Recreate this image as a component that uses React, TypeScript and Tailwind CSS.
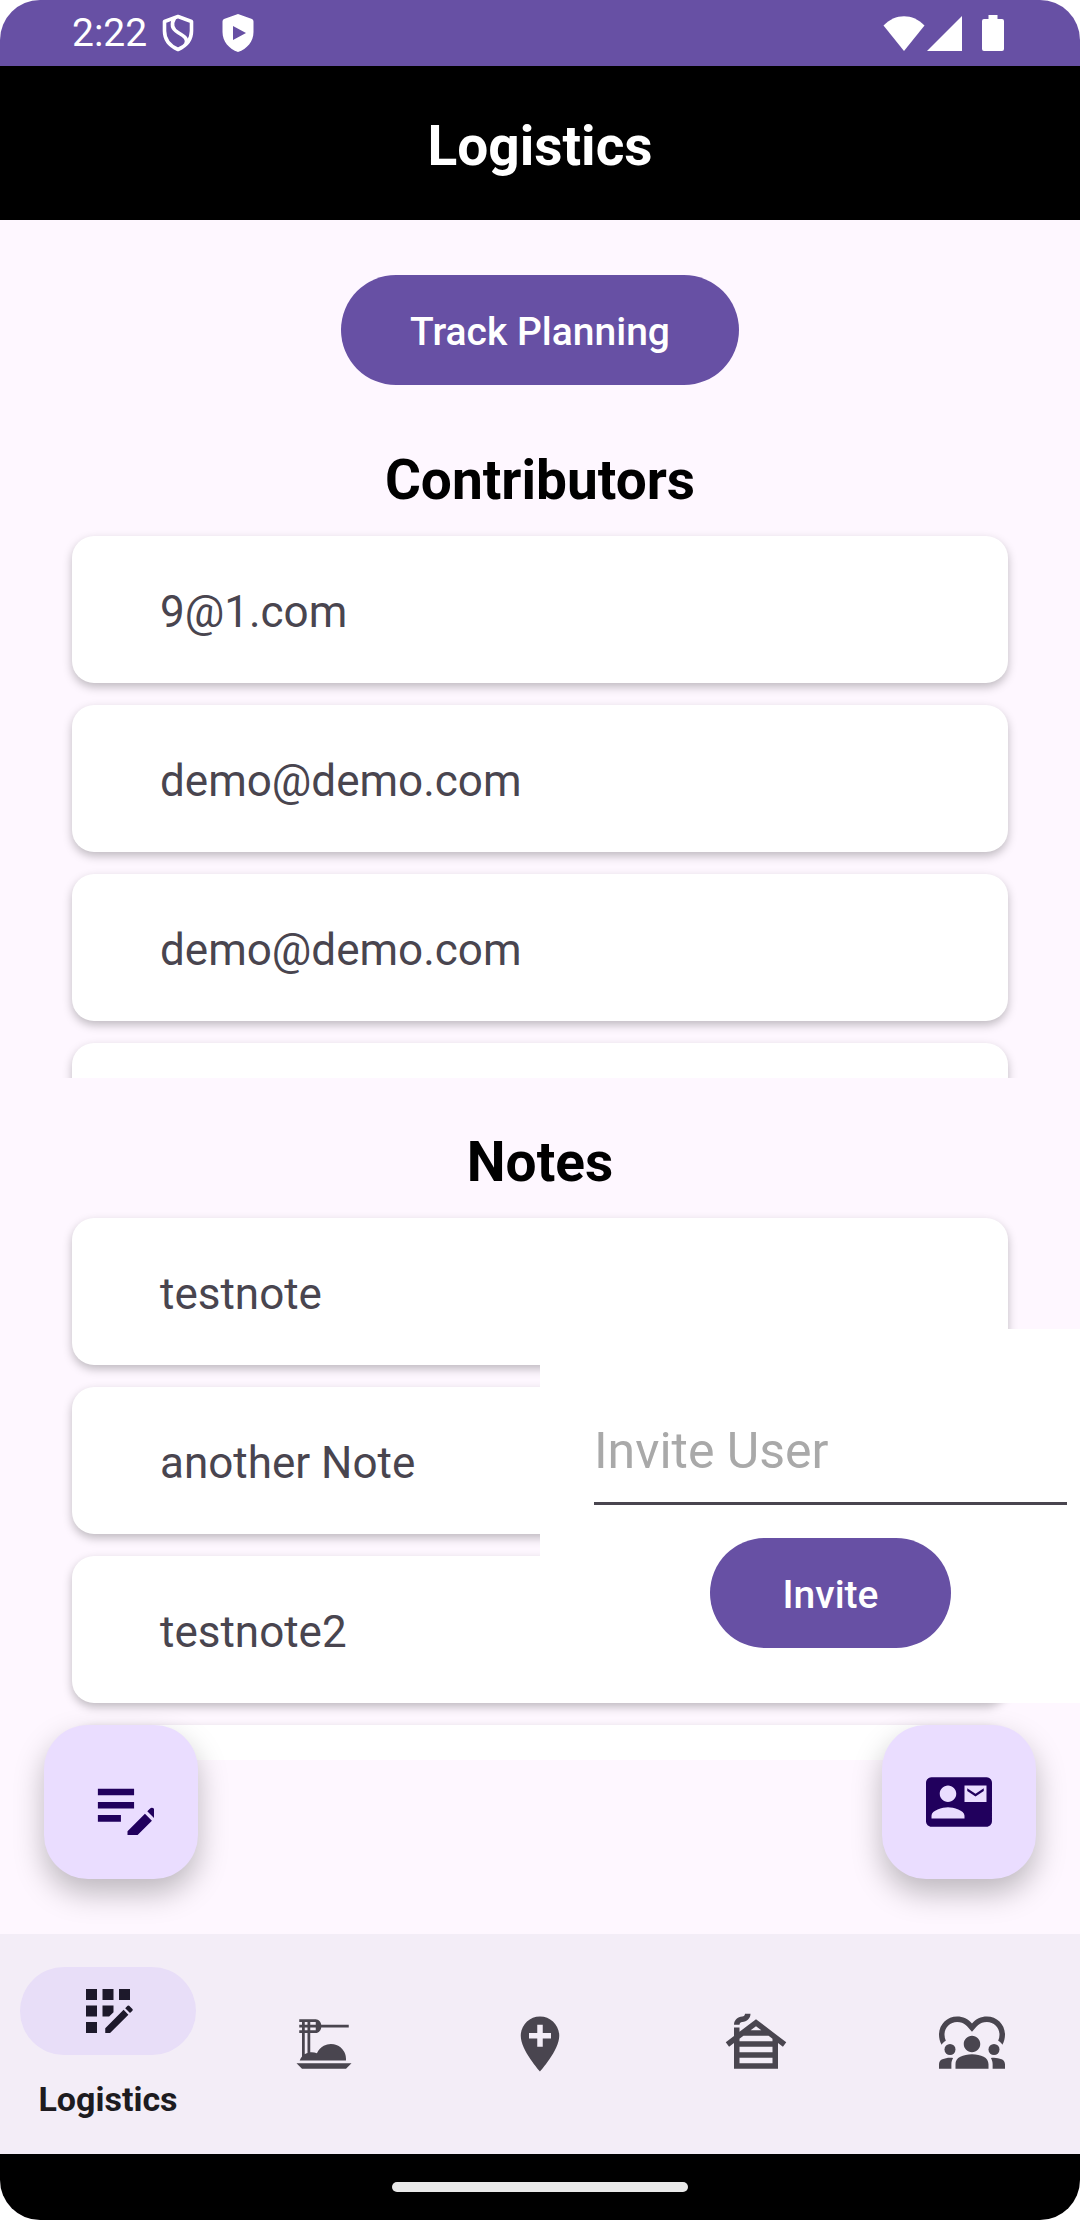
import type { ReactNode } from "react";
import {
  MdAddLocation,
  MdAppRegistration,
  MdCabin,
  MdContactMail,
  MdDinnerDining,
  MdDiversity1,
  MdEditNote,
} from "react-icons/md";

const contributors = ["9@1.com", "demo@demo.com", "demo@demo.com", ""];
const notes = ["testnote", "another Note", "testnote2", ""];

function StatusBar() {
  return (
    <div className="flex h-[66px] items-center justify-between bg-[#6750a4] pr-[76px] pl-[72px] text-white">
      <div className="flex items-center">
        <span className="text-[39px] leading-[46px]">2:22</span>
        <svg className="ml-[15px] h-[38px] w-8" viewBox="0 0 32 38" fill="none" stroke="currentColor" strokeWidth="3.6" strokeLinejoin="round">
          <path d="M16 2.500 29.500 7.500V17C29.500 25.500 24 32 16 35.500 8 32 2.500 25.500 2.500 17V7.500Z" />
          <path d="M12.500 4C9 10 10 15 16 18.500 23 22.500 26 25 24 30" />
        </svg>
        <svg className="ml-[28px] h-[38px] w-8" viewBox="0 0 32 38" fill="currentColor">
          <path
            fillRule="evenodd"
            d="M16 0 30 5Q31.500 5.600 31.500 7.500V18C31.500 27.500 25 35 16 38 7 35 .5 27.500 .5 18V7.500Q.5 5.600 2 5ZM11 12V26L24 19Z"
          />
        </svg>
      </div>
      <div className="flex items-center">
        <svg className="h-9 w-[42px]" viewBox="0 0 42 36" fill="currentColor">
          <path d="M.5 10.500C12-2 30-2 41.500 10.500L21 36Z" />
        </svg>
        <svg className="ml-[2px] h-9 w-[35px]" viewBox="0 0 35 36" fill="currentColor">
          <path d="M35 1V36H0Z" />
        </svg>
        <svg className="ml-5 h-9 w-[22px]" viewBox="0 0 22 36" fill="currentColor">
          <path d="M6.500 0H15.500V4H20Q22 4 22 6V34Q22 36 20 36H2Q0 36 0 34V6Q0 4 2 4H6.500Z" />
        </svg>
      </div>
    </div>
  );
}

function Card({ text }: { text: string }) {
  return (
    <li className="h-[147px] shrink-0 rounded-[22px] bg-white pt-[50px] pl-[88px] text-[44px] leading-[52px] text-[#49454f] shadow-[0_4px_10px_rgba(0,0,0,0.25)]">
      {text}
    </li>
  );
}

function CardList({ title, items }: { title: string; items: string[] }) {
  return (
    <>
      <h2 className="text-center text-[55px] leading-[64px] font-bold text-black">{title}</h2>
      <ul className="flex h-[566px] flex-col gap-[22px] overflow-hidden px-[72px] pt-6">
        {items.map((text, i) => (
          <Card key={i} text={text} />
        ))}
      </ul>
    </>
  );
}

function PillButton({ children, className }: { children: ReactNode; className: string }) {
  return (
    <button
      type="button"
      className={`h-[110px] rounded-full bg-[#6750a4] pt-1 text-[39px] leading-[46px] font-medium text-white ${className}`}
    >
      {children}
    </button>
  );
}

function InvitePanel() {
  return (
    <form className="absolute right-0 bottom-[57px] flex w-1/2 flex-col items-center bg-white pt-[93px] pr-[13px] pb-[55px] pl-[54px]">
      <input
        type="text"
        aria-label="Invite User"
        placeholder="Invite User"
        className="h-[83px] w-full border-b-[3px] border-[#49454f] pb-[22px] text-[50px] leading-[58px] outline-none placeholder:text-[#a9a9a9]"
      />
      <PillButton className="mt-[33px] px-[73px]">Invite</PillButton>
    </form>
  );
}

const fabClass =
  "absolute bottom-[55px] flex size-[154px] items-center justify-center rounded-[44px] bg-[#eaddff] text-[#21005d] shadow-[0_14px_30px_rgba(0,0,0,0.26)]";

const tabs = [
  { label: "Food", icon: <MdDinnerDining className="size-[66px]" /> },
  { label: "Places", icon: <MdAddLocation className="size-[66px]" /> },
  { label: "Lodging", icon: <MdCabin className="size-[66px]" /> },
  { label: "Community", icon: <MdDiversity1 className="size-[66px]" /> },
];

export default function App() {
  return (
    <div className="min-h-screen bg-white font-['Roboto',sans-serif]">
      <div className="flex min-h-screen flex-col overflow-hidden rounded-[40px] bg-[#fef7ff]">
        <StatusBar />
        <header className="flex h-[154px] items-center justify-center bg-black pt-1.5">
          <h1 className="text-[55px] leading-[64px] font-bold text-white">Logistics</h1>
        </header>

        <main className="relative flex-1 pt-[55px] pb-[174px]">
          <div className="flex justify-center">
            <PillButton className="px-[69px]">Track Planning</PillButton>
          </div>
          <section className="mt-[63px]">
            <CardList title="Contributors" items={contributors} />
          </section>
          <section className="relative mt-[52px]">
            <CardList title="Notes" items={notes} />
            <InvitePanel />
          </section>
          <button type="button" aria-label="Add note" className={`${fabClass} left-11`}>
            <span className="block size-[66px] overflow-hidden">
              <MdEditNote className="size-[79px]" />
            </span>
          </button>
          <button type="button" aria-label="Invite contact" className={`${fabClass} right-11`}>
            <MdContactMail className="size-[66px]" />
          </button>
        </main>

        <nav className="grid h-[220px] grid-cols-5 bg-[#f3edf7] text-[#49454f]">
          <a href="#logistics" aria-current="page" className="flex flex-col items-center pt-[33px]">
            <span className="flex h-[88px] w-[176px] items-center justify-center rounded-full bg-[#e8def8] text-[#1d192b]">
              <MdAppRegistration className="size-[66px]" />
            </span>
            <span className="mt-6 text-[34px] leading-[40px] font-bold text-[#1d1b20]">Logistics</span>
          </a>
          {tabs.map((tab) => (
            <a key={tab.label} href={`#${tab.label.toLowerCase()}`} aria-label={tab.label} className="flex items-center justify-center">
              {tab.icon}
            </a>
          ))}
        </nav>
        <div className="flex h-[66px] items-center justify-center bg-black">
          <div className="h-[10px] w-[296px] rounded-full bg-[#e8e8e8]" />
        </div>
      </div>
    </div>
  );
}
